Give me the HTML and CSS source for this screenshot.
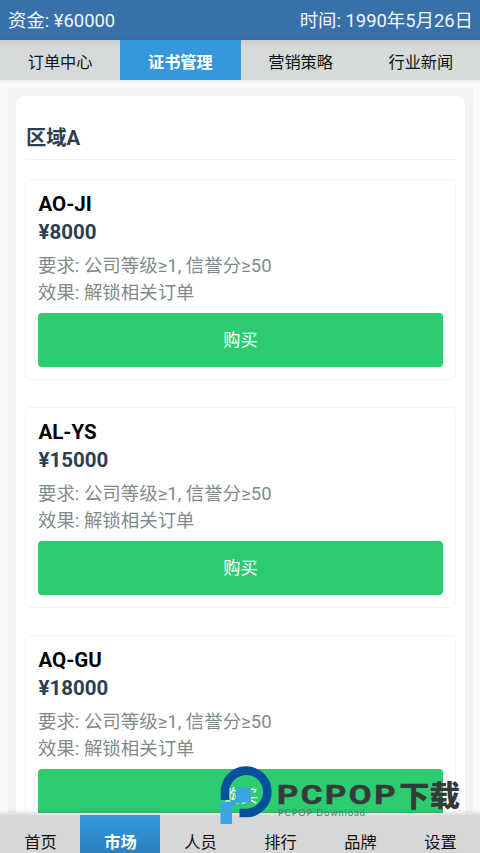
FILE: index.html
```html
<!DOCTYPE html>
<html lang="zh-CN">
<head>
<meta charset="utf-8">
<title>证书管理</title>
<link rel="stylesheet" href="styles.css">
</head>
<body>
<div class="app">
  <header class="status"><span>资金: ¥60000</span><span>时间: 1990年5月26日</span></header>
  <nav class="tabs">
    <a class="tab">订单中心</a><a class="tab active">证书管理</a><a class="tab">营销策略</a><a class="tab">行业新闻</a>
  </nav>
  <main class="content">
    <section class="panel">
      <h2 class="region">区域A</h2>
      <article class="card">
        <h3 class="name">AO-JI</h3>
        <p class="price">¥8000</p>
        <p class="detail">要求: 公司等级≥1, 信誉分≥50</p>
        <p class="detail">效果: 解锁相关订单</p>
        <button class="buy">购买</button>
      </article>
      <article class="card">
        <h3 class="name">AL-YS</h3>
        <p class="price">¥15000</p>
        <p class="detail">要求: 公司等级≥1, 信誉分≥50</p>
        <p class="detail">效果: 解锁相关订单</p>
        <button class="buy">购买</button>
      </article>
      <article class="card">
        <h3 class="name">AQ-GU</h3>
        <p class="price">¥18000</p>
        <p class="detail">要求: 公司等级≥1, 信誉分≥50</p>
        <p class="detail">效果: 解锁相关订单</p>
        <button class="buy">购买</button>
      </article>
    </section>
  </main>
  <nav class="bottom">
    <a class="item">首页</a><a class="item active">市场</a><a class="item">人员</a><a class="item">排行</a><a class="item">品牌</a><a class="item">设置</a>
  </nav>
  <div class="watermark">
    <svg class="mark" viewBox="0 0 52 60" width="52" height="60">
      <path d="M5 35V27.500A21.200 21.200 0 1 1 26 48H19.500" fill="none" stroke="#04529d" stroke-width="8.600"/>
      <path d="M.5 37H8C13 37 16 35 16 30V22.500H31V37.500H24C16 37.500 12 40 12 46V59H.5Z" fill="#3ba5e4"/>
    </svg>
    <svg class="brand" viewBox="0 0 184 46" width="184" height="46">
      <text class="brand-latin" x="-1" y="24" textLength="121" lengthAdjust="spacingAndGlyphs">PCPOP</text>
      <text class="brand-cjk" x="121" y="26.500" textLength="61" lengthAdjust="spacingAndGlyphs">下载</text>
      <text class="brand-sub" x="0" y="36" textLength="88" lengthAdjust="spacingAndGlyphs">PCPOP Download</text>
    </svg>
  </div>
</div>
</body>
</html>
```
FILE: styles.css
```css
* { box-sizing: border-box; }
body {
  margin: 0;
  background: #f9fafc;
  font-family: Roboto, "Noto Sans CJK SC", sans-serif;
  color: #111;
}
.app {
  position: relative;
  display: flex;
  flex-direction: column;
  width: 480px;
  height: 853px;
  overflow: hidden;
}
.status {
  flex: none;
  display: flex;
  justify-content: space-between;
  height: 40px;
  padding: 0 7px 0 8px;
  line-height: 41px;
  font-size: 18.4px;
  color: #f1f6fb;
  background: #3870aa;
}
.tabs {
  flex: none;
  display: flex;
  height: 40px;
  margin-right: -1px;
  background: linear-gradient(#cbd0d1, #d5dbdb 7px);
  box-shadow: 0 1px 4px rgba(0, 0, 0, .1);
}
.tab {
  flex: 1;
  padding-top: 3px;
  text-align: center;
  line-height: 40px;
  font-size: 16.2px;
}
.tab.active {
  font-weight: 700;
  color: #fff;
  background: #3498db;
}
.content {
  flex: 1;
  min-height: 0;
  overflow: hidden;
  margin: 8px 7px 0 8px;
  padding: 8px 8px 0;
  background: #f3f3f4;
}
.panel {
  height: 900px;
  padding: 21px 9px 0;
  border-radius: 8px;
  background: #fff;
}
.region {
  height: 43px;
  margin: 0 0 19px;
  padding-left: 1px;
  border-bottom: 1px solid #ecf0f1;
  line-height: 42px;
  font-size: 20.3px;
  color: #2c3e50;
}
.card {
  height: 201px;
  margin-bottom: 27px;
  padding: 10px 12px 0;
  border: 1px solid #f4f5f5;
  border-radius: 5px;
}
.name, .price {
  margin: 0;
  height: 28px;
  padding-left: .5px;
  line-height: 29px;
  font-size: 20.5px;
  font-weight: 700;
  color: #000;
}
.price { color: #2c3e50; }
.detail {
  margin: 0;
  height: 27px;
  line-height: 27px;
  font-size: 18.45px;
  color: #7f8c8d;
}
.price + .detail { margin-top: 7px; }
.buy {
  display: block;
  width: 100%;
  height: 54px;
  margin-top: 6px;
  padding: 0;
  border: 0;
  border-radius: 4px;
  background: #2ecc71;
  font: 17.2px/52px Roboto, "Noto Sans CJK SC", sans-serif;
  color: #fff;
}
.bottom {
  flex: none;
  display: flex;
  height: 40px;
  border-top: 2px solid #e2e2e2;
  background: #d7d7d7;
  box-shadow: 0 -1px 4px rgba(0, 0, 0, .12);
}
.item {
  flex: 1;
  padding: 15px 0 0 1px;
  text-align: center;
  line-height: 25px;
  font-size: 16.2px;
}
.item.active {
  font-weight: 700;
  color: #fff;
  background: linear-gradient(#3498db, #2c81bd);
}
.watermark {
  position: absolute;
  left: 220px;
  top: 765px;
  display: flex;
  gap: 6px;
}
.brand { margin-top: 15px; overflow: visible; }
.brand-latin {
  font: 700 26px Roboto, sans-serif;
  letter-spacing: 2px;
  fill: #363b39;
  stroke: #363b39;
  stroke-width: .6px;
}
.brand-cjk {
  font: 900 29px "Noto Sans CJK SC", sans-serif;
  fill: #363b39;
}
.brand-sub {
  font: 8.6px Lato, sans-serif;
  letter-spacing: 1px;
  fill: #66736b;
}
```
